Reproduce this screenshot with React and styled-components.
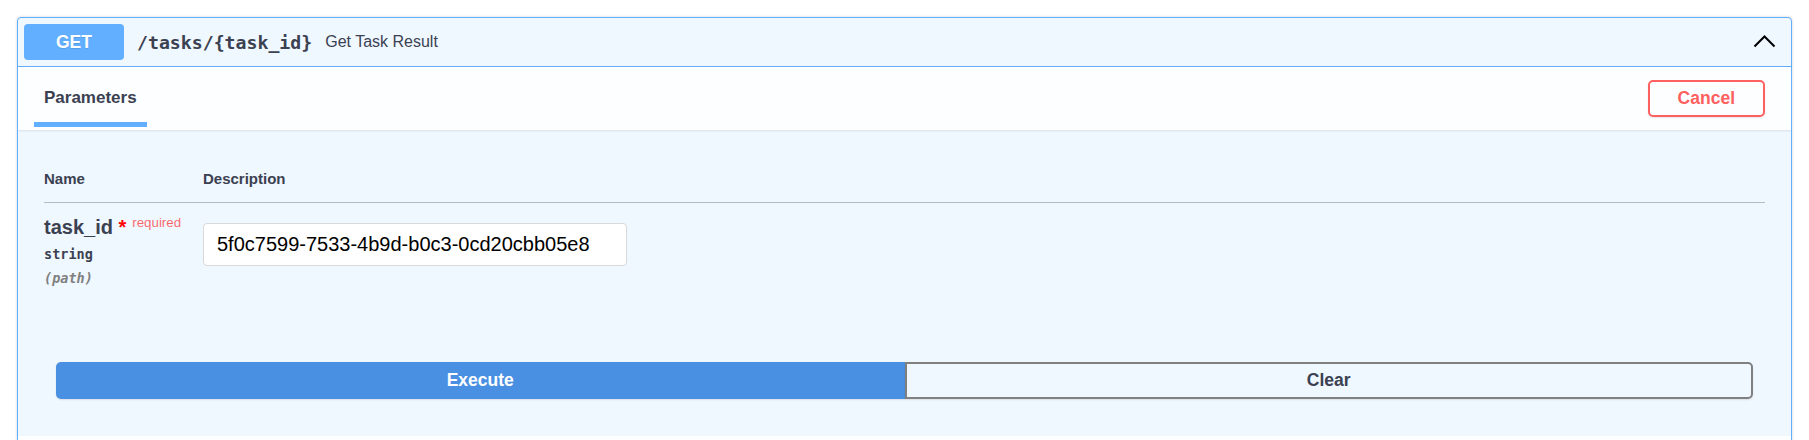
import React from "react";
import styled, { createGlobalStyle } from "styled-components";

const GlobalStyle = createGlobalStyle`
  html, body {
    margin: 0;
    padding: 0;
    background: #ffffff;
    overflow: hidden;
  }
  body {
    font-family: "Liberation Sans", Arial, sans-serif;
    color: #3b4151;
  }
`;

const Page = styled.div`
  padding: 17px 17px 0;
`;

const Opblock = styled.div`
  border: 1px solid #61affe;
  border-radius: 4px;
  background: #eff7ff;
  box-shadow: 0 0 3px rgba(0, 0, 0, 0.19);
  overflow: hidden;
`;

const Summary = styled.div`
  display: flex;
  align-items: center;
  padding: 6px;
  border-bottom: 1px solid #61affe;
`;

const Method = styled.span`
  width: 100px;
  height: 36px;
  display: flex;
  align-items: center;
  justify-content: center;
  background: #61affe;
  color: #ffffff;
  font-size: 17.5px;
  font-weight: 700;
  border-radius: 4px;
  text-shadow: 0 1px 0 rgba(0, 0, 0, 0.1);
`;

const Path = styled.span`
  padding: 0 13px;
  font-family: "DejaVu Sans Mono", "Liberation Mono", monospace;
  font-size: 18.2px;
  font-weight: 700;
  color: #3b4151;
`;

const SummaryDesc = styled.span`
  flex: 1;
  font-size: 16px;
  color: #3b4151;
`;

const ArrowButton = styled.button`
  display: flex;
  align-items: center;
  justify-content: center;
  border: none;
  background: transparent;
  padding: 0;
  margin-right: 8px;
  cursor: pointer;
`;

const SectionHeader = styled.div`
  display: flex;
  justify-content: space-between;
  align-items: stretch;
  height: 63px;
  padding: 0 26px 0 16px;
  background: rgba(255, 255, 255, 0.8);
  box-shadow: 0 1px 2px rgba(0, 0, 0, 0.1);
`;

const Tab = styled.div`
  display: flex;
  flex-direction: column;
  justify-content: flex-end;
  padding-bottom: 3px;
`;

const TabLabel = styled.h4`
  margin: 0 0 14px;
  padding: 0 10px;
  font-size: 17px;
  line-height: 20px;
  font-weight: 700;
  color: #3b4151;
`;

const TabBar = styled.div`
  height: 5px;
  background: #61affe;
`;

const CancelButton = styled.button`
  align-self: center;
  height: 37px;
  padding: 0 28px;
  border: 2px solid #ff6060;
  border-radius: 5px;
  background: transparent;
  color: #ff6060;
  font-family: "Liberation Sans", Arial, sans-serif;
  font-size: 17.5px;
  font-weight: 700;
  box-shadow: 0 1px 2px rgba(0, 0, 0, 0.1);
  cursor: pointer;
`;

const ParamsBody = styled.div`
  padding: 40px 26px 38px;
`;

const Grid = styled.div`
  display: grid;
  grid-template-columns: 159px 1fr;
`;

const TableHead = styled(Grid)`
  padding-bottom: 14px;
  border-bottom: 1px solid #b3bbc7;
`;

const ColTitle = styled.div`
  font-size: 15px;
  line-height: 18px;
  font-weight: 700;
  color: #3b4151;
`;

const ParamRow = styled(Grid)`
  padding-top: 12px;
`;

const NameCell = styled.div`
  display: flex;
  flex-direction: column;
`;

const ParamName = styled.div`
  font-size: 20px;
  line-height: 24px;
  font-weight: 700;
  color: #3b4151;
  white-space: nowrap;
`;

const Star = styled.span`
  color: #ff0000;
`;

const Required = styled.span`
  padding-left: 6px;
  font-size: 13.3px;
  line-height: 1;
  font-weight: 400;
  color: rgba(255, 0, 0, 0.6);
  vertical-align: 7px;
`;

const Mono = styled.div`
  margin-top: 6px;
  font-family: "DejaVu Sans Mono", "Liberation Mono", monospace;
  font-size: 13.5px;
  line-height: 18px;
  font-weight: 700;
  color: ${(p) => (p.$muted ? "#808080" : "#3b4151")};
  font-style: ${(p) => (p.$muted ? "italic" : "normal")};
`;

const ValueInput = styled.input`
  box-sizing: border-box;
  width: 424px;
  height: 43px;
  margin-top: 8px;
  padding: 0 13px;
  border: 1px solid #d9d9d9;
  border-radius: 4px;
  background: #ffffff;
  color: #000000;
  font-family: "Liberation Sans", Arial, sans-serif;
  font-size: 20px;
  outline: none;
`;

const ButtonGroup = styled.div`
  display: flex;
  padding: 37px 38px;
`;

const ControlButton = styled.button`
  flex: 1;
  box-sizing: border-box;
  height: 37px;
  border: 2px solid ${(p) => (p.$primary ? "#4990e2" : "#808080")};
  border-radius: ${(p) => (p.$primary ? "5px 0 0 5px" : "0 5px 5px 0")};
  background: ${(p) => (p.$primary ? "#4990e2" : "transparent")};
  color: ${(p) => (p.$primary ? "#ffffff" : "#3b4151")};
  font-family: "Liberation Sans", Arial, sans-serif;
  font-size: 17.5px;
  font-weight: 700;
  box-shadow: 0 1px 2px rgba(0, 0, 0, 0.1);
  cursor: pointer;
`;

// next section (responses) only peeks in at the bottom edge
const NextSection = styled.div`
  height: 63px;
  background: rgba(255, 255, 255, 0.8);
  box-shadow: 0 1px 2px rgba(0, 0, 0, 0.1);
`;

const Chevron = () => (
  <svg width="25" height="25" viewBox="0 0 25 25">
    <polyline
      points="2.5,16.5 12.5,6.5 22.5,16.5"
      fill="none"
      stroke="#000"
      strokeWidth="2"
    />
  </svg>
);

export default function App() {
  return (
    <>
      <GlobalStyle />
      <Page>
        <Opblock>
          <Summary>
            <Method>GET</Method>
            <Path>/tasks/{"{task_id}"}</Path>
            <SummaryDesc>Get Task Result</SummaryDesc>
            <ArrowButton aria-label="collapse">
              <Chevron />
            </ArrowButton>
          </Summary>

          <SectionHeader>
            <Tab>
              <TabLabel>Parameters</TabLabel>
              <TabBar />
            </Tab>
            <CancelButton>Cancel</CancelButton>
          </SectionHeader>

          <ParamsBody>
            <TableHead>
              <ColTitle>Name</ColTitle>
              <ColTitle>Description</ColTitle>
            </TableHead>
            <ParamRow>
              <NameCell>
                <ParamName>
                  task_id<Star>{"\u00a0*"}</Star>
                  <Required>required</Required>
                </ParamName>
                <Mono>string</Mono>
                <Mono $muted>(path)</Mono>
              </NameCell>
              <div>
                <ValueInput
                  type="text"
                  defaultValue="5f0c7599-7533-4b9d-b0c3-0cd20cbb05e8"
                />
              </div>
            </ParamRow>
          </ParamsBody>

          <ButtonGroup>
            <ControlButton $primary>Execute</ControlButton>
            <ControlButton>Clear</ControlButton>
          </ButtonGroup>

          <NextSection />
        </Opblock>
      </Page>
    </>
  );
}
